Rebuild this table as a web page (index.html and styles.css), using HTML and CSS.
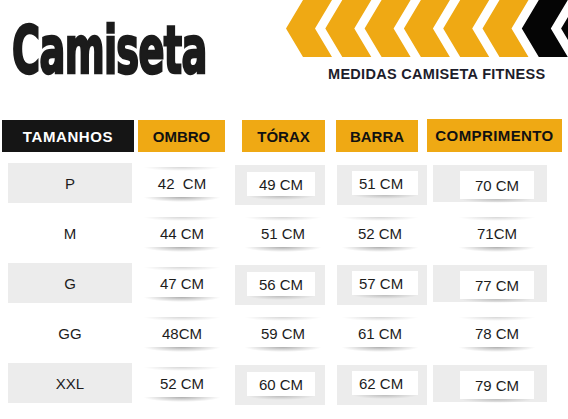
FILE: index.html
```html
<!DOCTYPE html>
<html lang="pt">
<head>
    <meta charset="UTF-8">
    <meta name="viewport" content="width=device-width, initial-scale=1.0">
    <title>Medidas Camiseta Fitness</title>
    <link rel="stylesheet" href="styles.css">
</head>
<body>
    <!-- Title and banner -->
    <header class="top">
        <h1 class="title">Camiseta</h1>
        <div class="brand">
            <svg class="chevrons" viewBox="0 0 283 57" xmlns="http://www.w3.org/2000/svg">
                <g fill="#efa914">
                    <polygon points="17,0 46,0 29,28.5 46,57 17,57 0,28.5"/>
                    <polygon points="56.3,0 85.3,0 68.3,28.5 85.3,57 56.3,57 39.3,28.5"/>
                    <polygon points="95.6,0 124.6,0 107.6,28.5 124.6,57 95.6,57 78.6,28.5"/>
                    <polygon points="134.9,0 163.9,0 146.9,28.5 163.9,57 134.9,57 117.9,28.5"/>
                    <polygon points="174.2,0 203.2,0 186.2,28.5 203.2,57 174.2,57 157.2,28.5"/>
                    <polygon points="213.5,0 242.5,0 225.5,28.5 242.5,57 213.5,57 196.5,28.5"/>
                </g>
                <g fill="#050505">
                    <polygon points="252.8,0 281.8,0 264.8,28.5 281.8,57 252.8,57 235.8,28.5"/>
                    <polygon points="292.1,0 321.1,0 304.1,28.5 321.1,57 292.1,57 275.1,28.5"/>
                </g>
            </svg>
            <p class="subtitle">MEDIDAS CAMISETA FITNESS</p>
        </div>
    </header>

    <!-- Size chart -->
    <main class="chart">
        <div class="chart-head">
            <div class="head head-dark head-size">TAMANHOS</div>
            <div class="head head-ombro">OMBRO</div>
            <div class="head head-torax">TÓRAX</div>
            <div class="head head-barra">BARRA</div>
            <div class="head head-comp">COMPRIMENTO</div>
        </div>

        <div class="chart-row">
            <div class="size boxed">P</div>
            <div class="c2 lined">42&nbsp; CM</div>
            <div class="c3 box"><span class="inner">49 CM</span></div>
            <div class="c4 box"><span class="inner">51 CM</span></div>
            <div class="c5 box"><span class="inner">70 CM</span></div>
        </div>

        <div class="chart-row">
            <div class="size">M</div>
            <div class="c2 lined">44 CM</div>
            <div class="c3 lined">51 CM</div>
            <div class="c4 lined">52 CM</div>
            <div class="c5 lined">71CM</div>
        </div>

        <div class="chart-row">
            <div class="size boxed">G</div>
            <div class="c2 lined">47 CM</div>
            <div class="c3 box"><span class="inner">56 CM</span></div>
            <div class="c4 box"><span class="inner">57 CM</span></div>
            <div class="c5 box"><span class="inner">77 CM</span></div>
        </div>

        <div class="chart-row">
            <div class="size">GG</div>
            <div class="c2 lined">48CM</div>
            <div class="c3 lined">59 CM</div>
            <div class="c4 lined">61 CM</div>
            <div class="c5 lined">78 CM</div>
        </div>

        <div class="chart-row">
            <div class="size boxed">XXL</div>
            <div class="c2 lined">52 CM</div>
            <div class="c3 box"><span class="inner">60 CM</span></div>
            <div class="c4 box"><span class="inner">62 CM</span></div>
            <div class="c5 box"><span class="inner">79 CM</span></div>
        </div>
    </main>
</body>
</html>
```

FILE: styles.css
```css
/* Page base */
body {
    margin: 0;
    width: 568px;
    height: 419px;
    overflow: hidden;
    background-color: #fff;
    color: #1c1c1c;
    font-family: "Liberation Sans", Arial, sans-serif;
}
/* Title and banner */
.top {
    display: flex;
    height: 119px;
}
.title {
    flex: 0 0 274px;
    min-width: 0;
    margin: 19px 0 0 12px;
    white-space: nowrap;
    font-family: "DejaVu Sans", sans-serif;
    font-stretch: condensed;
    font-weight: bold;
    font-size: 65px;
    line-height: 64px;
    letter-spacing: -1px;
    color: #1b1b1b;
    -webkit-text-stroke: 2.5px #1b1b1b;
    transform: scaleX(0.655);
    transform-origin: left top;
}
.brand {
    display: flex;
    flex-direction: column;
    width: 283px;
}
.chevrons {
    display: block;
    width: 283px;
    height: 57px;
}
.subtitle {
    margin: 9px 0 0 42px;
    font-weight: bold;
    font-size: 14.5px;
    line-height: 16px;
    letter-spacing: 0.3px;
    color: #1d1d2b;
    white-space: nowrap;
}
/* Chart grid */
.chart {
    padding-left: 2px;
}
.chart-head, .chart-row {
    display: grid;
    grid-template-columns: 134px 96px 99px 96px 139px;
}
.chart-head {
    height: 32px;
    margin: 1px 0 6px;
}
.chart-row {
    height: 50px;
    align-items: start;
}
/* Header cells */
.head {
    display: flex;
    align-items: center;
    justify-content: center;
    height: 32px;
    font-weight: bold;
    font-size: 15px;
    color: #111;
    background-color: #efa914;
}
.head-dark {
    color: #fff;
    background-color: #151515;
    letter-spacing: 0.6px;
}
.head-size { width: 132px; }
.head-ombro { width: 87px; margin-left: 2px; }
.head-torax { width: 83px; margin-left: 10px; }
.head-barra { width: 82px; margin-left: 5px; }
.head-comp { width: 135px; height: 33px; margin-top: -1px; letter-spacing: 0.4px; }
/* Size column */
.size {
    display: flex;
    align-items: center;
    justify-content: center;
    width: 124px;
    height: 40px;
    margin: 5px 0 0 6px;
    font-size: 15px;
}
.size.boxed {
    background-color: #ececec;
}
/* Measures with soft shadow lines */
.lined {
    position: relative;
    display: flex;
    align-items: center;
    justify-content: center;
    width: 78px;
    height: 32px;
    margin-top: 9px;
    font-size: 15px;
    white-space: nowrap;
}
.lined::before, .lined::after, .inner::after {
    content: "";
    position: absolute;
    left: 0;
    right: 0;
}
.lined::before {
    top: 0;
    height: 4px;
    background: radial-gradient(ellipse at 50% 0%, rgba(0, 0, 0, 0.16), rgba(0, 0, 0, 0) 70%);
}
.lined::after {
    bottom: -3px;
    height: 5px;
    background: radial-gradient(ellipse at 50% 0%, rgba(0, 0, 0, 0.32), rgba(0, 0, 0, 0) 70%);
}
.c2.lined { margin-left: 7px; }
.c3.lined { margin-left: 12px; }
.c4.lined { margin-left: 10px; }
.c5.lined { margin-left: 31px; }
/* Measures in grey boxes */
.box {
    display: flex;
    box-sizing: border-box;
    height: 40px;
    margin-top: 7px;
    background-color: #ececec;
}
.inner {
    position: relative;
    flex: 1;
    display: flex;
    align-items: center;
    justify-content: center;
    font-size: 15px;
    white-space: nowrap;
    background-color: #fff;
}
.inner::after {
    bottom: -4px;
    height: 4px;
    background: radial-gradient(ellipse at 50% 0%, rgba(0, 0, 0, 0.2), rgba(0, 0, 0, 0) 70%);
}
.c3.box {
    width: 90px;
    margin-left: 3px;
    padding: 7px 10px 9px 12px;
}
.c4.box {
    width: 90px;
    margin-left: 6px;
    padding: 6px 9px 10px 15px;
}
.c4 .inner {
    justify-content: flex-start;
    padding-left: 7px;
}
.c5.box {
    width: 114px;
    height: 37px;
    margin-left: 6px;
    padding: 6px 13px 3px 27px;
}
```
